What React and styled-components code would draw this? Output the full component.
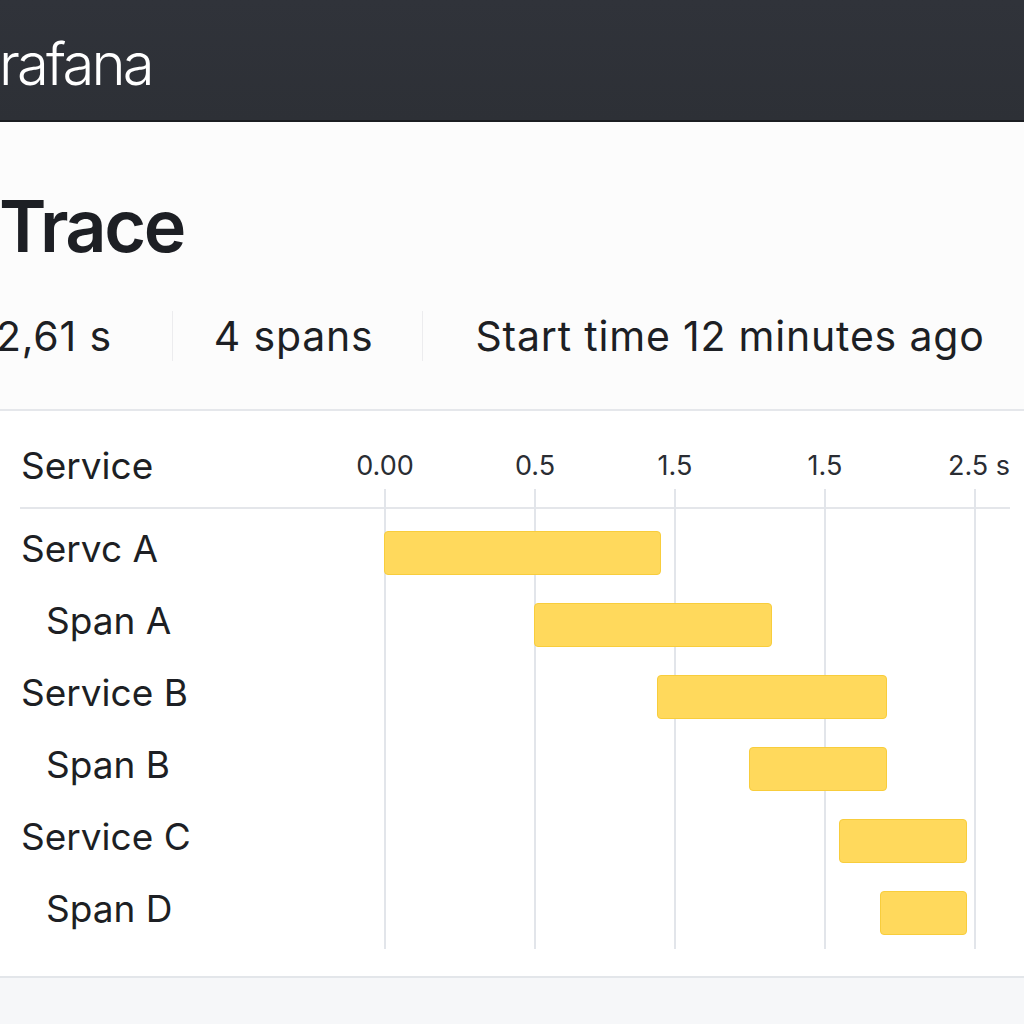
import styled, { createGlobalStyle } from "styled-components";

const GlobalStyle = createGlobalStyle`
  html, body {
    margin: 0;
    padding: 0;
    background: #f6f7f9;
    font-family: Inter, "Noto Sans", "Liberation Sans", sans-serif;
    color: #1d1f24;
    overflow: hidden;
  }
`;

const Page = styled.div`
  width: 1024px;
  height: 1024px;
  overflow: hidden;
  background: #f6f7f9;
`;

const TopBar = styled.header`
  height: 122px;
  background: linear-gradient(180deg, #30333a 0%, #2d3036 100%);
  border-bottom: 2px solid #1b1d21;
  display: flex;
  align-items: center;
  box-sizing: border-box;
  padding-top: 8px;
`;

const Logo = styled.div`
  color: #ffffff;
  font-size: 58px;
  font-weight: 300;
  letter-spacing: -2.8px;
  margin-left: -1px;
`;

const Summary = styled.section`
  background: #fcfcfc;
  padding: 68px 0 48px 0;
  border-bottom: 2px solid #e5e7eb;
`;

const Title = styled.h1`
  margin: 0 0 49px -1px;
  font-size: 72px;
  line-height: 1;
  font-weight: 600;
  letter-spacing: -2.5px;
  color: #1d1f24;
`;

const Stats = styled.div`
  display: flex;
  align-items: center;
  margin-left: -4px;
`;

const Stat = styled.div`
  flex-shrink: 0;
  white-space: nowrap;
  font-size: 41px;
  letter-spacing: 0.8px;
  line-height: 50px;
  padding: 0 48px 0 ${(p) => p.$pl || 0}px;
  border-left: 1px solid #ececee;
  color: #1d1f24;

  &:first-child {
    padding-right: 60px;
    border-left: none;
  }
`;

const Panel = styled.section`
  background: #ffffff;
  padding: 0 14px 27px 20px;
  border-bottom: 2px solid #e3e6ea;
`;

const HeaderRow = styled.div`
  display: grid;
  grid-template-columns: 365px 1fr;
  align-items: center;
  box-sizing: border-box;
  height: 98px;
  padding-top: 12px;
  border-bottom: 2px solid #e4e6ea;
`;

const ColumnTitle = styled.div`
  font-size: 37px;
  padding-left: 1px;
`;

const Axis = styled.div`
  position: relative;
  height: 40px;
`;

const Tick = styled.span`
  position: absolute;
  top: 50%;
  transform: translate(-50%, -50%);
  font-size: 27px;
  color: #2a2d33;
  white-space: nowrap;
`;

const Body = styled.div`
  position: relative;
  padding-top: 8px;
`;

const Grid = styled.div`
  position: absolute;
  left: 365px;
  right: 0;
  top: -20px;
  bottom: 0;
  pointer-events: none;
`;

const GridLine = styled.div`
  position: absolute;
  top: 0;
  bottom: 0;
  width: 2px;
  margin-left: -1px;
  background: #e2e5ea;
`;

const Row = styled.div`
  display: grid;
  grid-template-columns: 365px 1fr;
  align-items: center;
  height: 72px;
`;

const Label = styled.div`
  font-size: 37px;
  padding-left: ${(p) => (p.$child ? "26px" : "1px")};
  padding-bottom: 10px;
  color: #1d1f24;
`;

const Track = styled.div`
  position: relative;
  height: 44px;
`;

const Bar = styled.div`
  position: absolute;
  top: 0;
  bottom: 0;
  box-sizing: border-box;
  background: #ffd95c;
  border: 1.5px solid #f8cd3c;
  border-radius: 4px;
`;

const ticks = [
  { label: "0.00", x: 0 },
  { label: "0.5", x: 150 },
  { label: "1.5", x: 290 },
  { label: "1.5", x: 440 },
  { label: "2.5 s", x: 590, offset: 4 },
];

const spans = [
  { name: "Servc A", child: false, start: -1, end: 276 },
  { name: "Span A", child: true, start: 149, end: 387 },
  { name: "Service B", child: false, start: 272, end: 502 },
  { name: "Span B", child: true, start: 364, end: 502 },
  { name: "Service C", child: false, start: 454, end: 582 },
  { name: "Span D", child: true, start: 495, end: 582 },
];

export default function App() {
  return (
    <Page>
      <GlobalStyle />
      <TopBar>
        <Logo>rafana</Logo>
      </TopBar>
      <Summary>
        <Title>Trace</Title>
        <Stats>
          <Stat>2,61 s</Stat>
          <Stat $pl={41}>4 spans</Stat>
          <Stat $pl={53}>Start time 12 minutes ago</Stat>
        </Stats>
      </Summary>
      <Panel>
        <HeaderRow>
          <ColumnTitle>Service</ColumnTitle>
          <Axis>
            {ticks.map((t, i) => (
              <Tick key={i} style={{ left: t.x + (t.offset || 0) }}>
                {t.label}
              </Tick>
            ))}
          </Axis>
        </HeaderRow>
        <Body>
          <Grid>
            {ticks.map((t, i) => (
              <GridLine key={i} style={{ left: t.x }} />
            ))}
          </Grid>
          {spans.map((s) => (
            <Row key={s.name}>
              <Label $child={s.child}>{s.name}</Label>
              <Track>
                <Bar style={{ left: s.start, width: s.end - s.start }} />
              </Track>
            </Row>
          ))}
        </Body>
      </Panel>
    </Page>
  );
}
